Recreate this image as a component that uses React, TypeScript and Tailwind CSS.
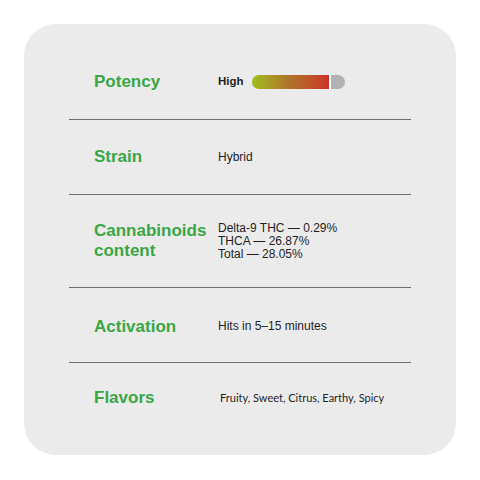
export default function App() {
  const label = "text-[17px] font-bold leading-[20px] text-[#3aa646]";
  const value = "text-[12px] leading-[13px] text-[#1f1f1f]";
  const divider = <div className="h-px bg-[#707070]" />;

  return (
    <div className="w-[480px] h-[480px] bg-white p-[24px] font-['Liberation_Sans',Arial,sans-serif]">
      <div className="w-[432px] h-[431px] rounded-[32px] bg-[#ebebeb] px-[45px] pt-[21px]">
        {/* Potency */}
        <div className="h-[74px] flex items-center pl-[25px]">
          <div className={`${label} w-[124px]`}>Potency</div>
          <div className="flex items-center gap-[8px]">
            <span className="text-[11.5px] font-bold text-[#1f1f1f]">High</span>
            <div className="flex h-[14px] w-[93px] rounded-full overflow-hidden">
              <div className="w-[77px] h-full bg-gradient-to-r from-[#9cbd1c] via-[#b0702a] to-[#cc2e28]" />
              <div className="w-[2px] h-full bg-white" />
              <div className="flex-1 h-full bg-[#b2b2b2]" />
            </div>
          </div>
        </div>
        {divider}

        {/* Strain */}
        <div className="h-[74px] flex items-center pl-[25px]">
          <div className={`${label} w-[124px]`}>Strain</div>
          <div className={value}>Hybrid</div>
        </div>
        {divider}

        {/* Cannabinoids */}
        <div className="h-[92px] flex items-center pl-[25px]">
          <div className={`${label} w-[124px]`}>
            Cannabinoids
            <br />
            content
          </div>
          <div className={value}>
            <div>Delta-9 THC — 0.29%</div>
            <div>THCA — 26.87%</div>
            <div>Total — 28.05%</div>
          </div>
        </div>
        {divider}

        {/* Activation */}
        <div className="h-[74px] flex items-center pl-[25px] pt-[3px]">
          <div className={`${label} w-[124px]`}>Activation</div>
          <div className={value}>Hits in 5–15 minutes</div>
        </div>
        {divider}

        {/* Flavors */}
        <div className="h-[68px] flex items-center pl-[25px] pt-[2px]">
          <div className={`${label} w-[124px]`}>Flavors</div>
          <div className="text-[11px] text-[#1f1f1f] font-['Lato',sans-serif] pl-[2px]">
            Fruity, Sweet, Citrus, Earthy, Spicy
          </div>
        </div>
      </div>
    </div>
  );
}
